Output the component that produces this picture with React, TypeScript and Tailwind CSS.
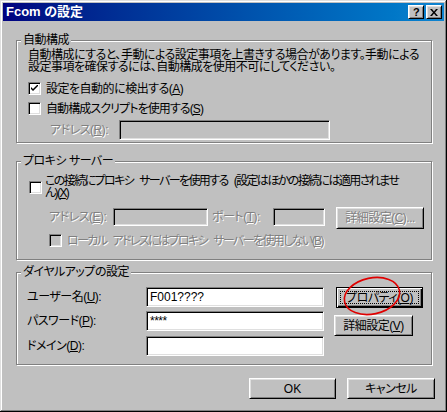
import React from "react";

// win98 style bevels
const sunken =
  "border border-t-[#808080] border-l-[#808080] border-r-white border-b-white shadow-[inset_1px_1px_0_#000,inset_-1px_-1px_0_#dfdfdf]";
const raised =
  "border border-t-white border-l-white border-r-black border-b-black shadow-[inset_1px_1px_0_#dfdfdf,inset_-1px_-1px_0_#808080]";
const etched = "border border-[#808080] shadow-[1px_1px_0_#fff,inset_1px_1px_0_#fff]";
const dis = "text-[#808080] [text-shadow:1px_1px_0_#fff]";

type GroupProps = {
  label: string;
  className?: string;
  children: React.ReactNode;
};

const Group = ({ label, className, children }: GroupProps) => (
  <div className={`relative ml-[13px] w-[416px] ${etched} ${className ?? ""}`}>
    <span className="absolute left-[4px] -top-[7px] bg-[#c0c0c0] px-[2px] leading-[12px] whitespace-nowrap">
      {label}
    </span>
    {children}
  </div>
);

const Check = ({ checked, disabled }: { checked?: boolean; disabled?: boolean }) => (
  <div
    className={`w-[13px] h-[13px] shrink-0 flex items-center justify-center ${sunken} ${
      disabled ? "bg-[#c0c0c0]" : "bg-white"
    }`}
  >
    {checked && (
      <svg width="7" height="7" viewBox="0 0 7 7">
        <path d="M0 2 L0 4 L2 6 L7 1 L7 -1 L2 4 Z" fill="#000" />
      </svg>
    )}
  </div>
);

// keeps the gap between words visible under tight tracking
const Sp = () => <span className="inline-block w-[6px]" />;

const Btn = ({
  children,
  className,
  disabled,
}: {
  children: React.ReactNode;
  className?: string;
  disabled?: boolean;
}) => (
  <div
    className={`flex items-center justify-center bg-[#c0c0c0] leading-[12px] whitespace-nowrap ${raised} ${
      disabled ? dis : ""
    } ${className ?? ""}`}
  >
    {children}
  </div>
);

export default function App() {
  return (
    <div className="relative w-[447px] h-[412px] bg-[#c0c0c0] p-[3px] shadow-[inset_-1px_-1px_0_#000,inset_1px_1px_0_#dfdfdf,inset_-2px_-2px_0_#808080,inset_2px_2px_0_#fff] font-['Liberation_Sans','Noto_Sans_CJK_JP',sans-serif] text-[12px] tracking-[-0.5px] text-black [font-feature-settings:'palt']">
      {/* title bar */}
      <div className="h-[18px] flex items-center justify-between pl-[3px] pr-[2px] bg-linear-to-r from-[#000080] to-[#1084d0]">
        <span className="text-white font-bold text-[13px] leading-[14px] tracking-normal whitespace-nowrap">Fcom の設定</span>
        <div className="flex gap-[2px]">
          <div className={`w-[16px] h-[14px] flex items-center justify-center bg-[#c0c0c0] ${raised}`}>
            <span className="font-bold text-[11px] leading-[10px] font-['Liberation_Sans',sans-serif]">?</span>
          </div>
          <div className={`w-[16px] h-[14px] flex items-center justify-center bg-[#c0c0c0] ${raised}`}>
            <svg width="8" height="7" viewBox="0 0 8 7">
              <path d="M0 0 H2 L4 2.5 L6 0 H8 L5 3.5 L8 7 H6 L4 4.5 L2 7 H0 L3 3.5 Z" fill="#000" />
            </svg>
          </div>
        </div>
      </div>

      {/* 自動構成 */}
      <Group label="自動構成" className="mt-[19px] h-[103px] pl-[11px] pt-[8px]">
        <div className="leading-[12px] whitespace-nowrap">
          <div>自動構成にすると、手動による設定事項を上書きする場合があります。手動による</div>
          <div>設定事項を確保するには、自動構成を使用不可にしてください。</div>
        </div>
        <div className="mt-[9px] flex items-center gap-[5px] h-[13px] leading-[12px]">
          <Check checked />
          <span>
            設定を自動的に検出する(<u>A</u>)
          </span>
        </div>
        <div className="mt-[7px] flex items-center gap-[5px] h-[13px] leading-[12px]">
          <Check />
          <span className="tracking-[-0.9px]">
            自動構成スクリプトを使用する(<u>S</u>)
          </span>
        </div>
        <div className="mt-[5px] flex items-center h-[20px]">
          <span className={`ml-[22px] w-[69px] leading-[12px] ${dis}`}>
            アドレス(<u>R</u>):
          </span>
          <div className={`w-[211px] h-[20px] bg-[#c0c0c0] ${sunken}`} />
        </div>
      </Group>

      {/* プロキシ サーバー */}
      <Group label="プロキシ サーバー" className="mt-[18px] h-[99px] pl-[11px] pt-[13px]">
        <div className="flex items-center gap-[3px] pl-[1px]">
          <Check />
          <div className="leading-[12px] whitespace-nowrap tracking-[-1.6px]">
            <div>
              この接続にプロキシ<Sp />サーバーを使用する<Sp />(設定はほかの接続には適用されませ
            </div>
            <div>
              ん)(<u>X</u>)
            </div>
          </div>
        </div>
        <div className="mt-[8px] flex items-start h-[22px]">
          <span className={`ml-[21px] w-[64px] mt-[4px] leading-[12px] whitespace-nowrap ${dis}`}>
            アドレス(<u>E</u>):
          </span>
          <div className={`w-[95px] h-[18px] mt-[1px] bg-[#c0c0c0] ${sunken}`} />
          <span className={`ml-[4px] w-[61px] mt-[4px] leading-[12px] whitespace-nowrap ${dis}`}>
            ポート(<u>T</u>):
          </span>
          <div className={`w-[52px] h-[18px] mt-[1px] bg-[#c0c0c0] ${sunken}`} />
          <Btn disabled className="ml-[11px] w-[88px] h-[22px]">
            <span>
              詳細設定(<u>C</u>)...
            </span>
          </Btn>
        </div>
        <div className="mt-[5px] flex items-center gap-[5px] h-[13px] ml-[21px]">
          <Check disabled />
          <span className={`leading-[12px] whitespace-nowrap tracking-[-1.6px] ${dis}`}>
            ローカル<Sp />アドレスにはプロキシ<Sp />サーバーを使用しない(<u>B</u>)
          </span>
        </div>
      </Group>

      {/* ダイヤルアップの設定 */}
      <Group label="ダイヤルアップの設定" className="mt-[12px] h-[93px] pl-[10px] pt-[14px] flex">
        <div className="flex flex-col">
          <div className="flex items-center h-[20px]">
            <span className="w-[119px] leading-[12px] whitespace-nowrap">
              ユーザー名(<u>U</u>):
            </span>
            <div className={`w-[178px] h-[20px] bg-white pl-[3px] flex items-center leading-[12px] tracking-normal ${sunken}`}>
              F001????
            </div>
          </div>
          <div className="mt-[4px] flex items-center h-[20px]">
            <span className="w-[119px] leading-[12px] whitespace-nowrap">
              パスワード(<u>P</u>):
            </span>
            <div className={`w-[178px] h-[20px] bg-white pl-[3px] flex items-center leading-[12px] ${sunken}`}>
              ****
            </div>
          </div>
          <div className="mt-[5px] flex items-center h-[20px]">
            <span className="w-[119px] leading-[12px] whitespace-nowrap">
              ドメイン(<u>D</u>):
            </span>
            <div className={`w-[178px] h-[20px] bg-white ${sunken}`} />
          </div>
        </div>
        <div className="flex flex-col ml-[12px]">
          <div className="w-[87px] h-[21px] border border-black bg-[#c0c0c0] shadow-[inset_1px_1px_0_#fff,inset_-1px_-1px_0_#000,inset_-2px_-2px_0_#808080] p-[3px]">
            <div className="w-full h-full border border-dotted border-black flex items-center justify-center leading-[12px] whitespace-nowrap">
              <span>
                プロパティ(<u>O</u>)
              </span>
            </div>
          </div>
          <Btn className="mt-[7px] -ml-[2px] w-[79px] h-[21px]">
            <span>
              詳細設定(<u>V</u>)
            </span>
          </Btn>
        </div>
      </Group>

      {/* OK / Cancel */}
      <div className="mt-[13px] flex justify-end gap-[11px] pr-[9px]">
        <Btn className="w-[87px] h-[21px] tracking-normal">OK</Btn>
        <Btn className="w-[88px] h-[21px]">キャンセル</Btn>
      </div>

      {/* red annotation */}
      <svg className="absolute left-[340px] top-[272px]" width="64" height="48" viewBox="0 0 64 48">
        <ellipse
          cx="32"
          cy="24"
          rx="28"
          ry="18"
          transform="rotate(-12 32 24)"
          fill="none"
          stroke="#e00000"
          strokeWidth="1.6"
        />
      </svg>
    </div>
  );
}
